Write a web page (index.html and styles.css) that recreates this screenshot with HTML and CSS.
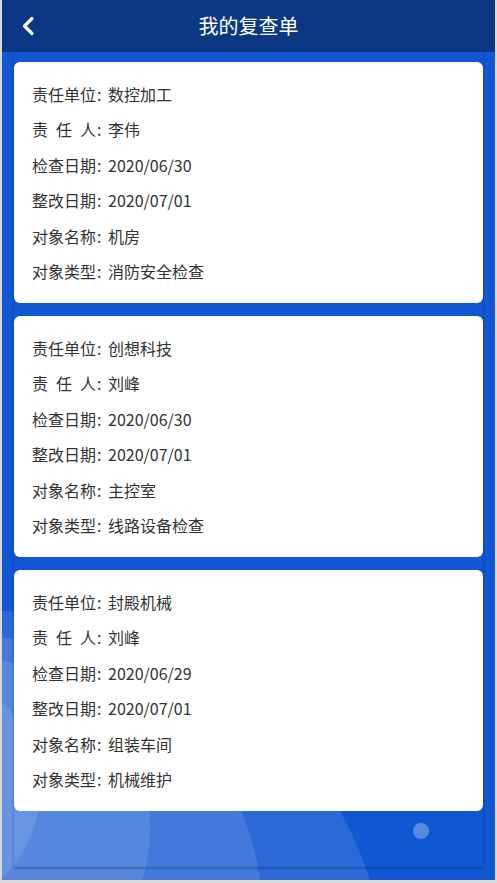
FILE: index.html
```html
<!DOCTYPE html>
<html lang="zh-CN">
<head>
<meta charset="utf-8">
<title>我的复查单</title>
<link rel="stylesheet" href="styles.css">
</head>
<body>
<div class="app">
  <svg class="bg-deco" width="493" height="880" viewBox="0 0 493 880" aria-hidden="true">
    <circle cx="-2" cy="1000" r="389" class="ring"/>
    <circle cx="-22" cy="920" r="283" class="ring"/>
    <circle cx="-22" cy="830" r="170" class="ring"/>
    <circle cx="-82" cy="790" r="120" class="ring"/>
    <circle cx="419" cy="831" r="8" class="dot"/>
  </svg>
  <header class="topbar">
    <span class="back">
      <svg width="14" height="20" viewBox="0 0 14 20"><path d="M11 2.5 L3.5 10 L11 17.5" fill="none" stroke="#fff" stroke-width="3.2" stroke-linecap="round" stroke-linejoin="round"/></svg>
    </span>
    <h1 class="title">我的复查单</h1>
  </header>
  <main class="panel">
    <section class="card">
      <div class="row"><span class="label">责任单位</span><span class="colon">:</span><span class="value">数控加工</span></div>
      <div class="row"><span class="label">责任人</span><span class="colon">:</span><span class="value">李伟</span></div>
      <div class="row"><span class="label">检查日期</span><span class="colon">:</span><span class="value">2020/06/30</span></div>
      <div class="row"><span class="label">整改日期</span><span class="colon">:</span><span class="value">2020/07/01</span></div>
      <div class="row"><span class="label">对象名称</span><span class="colon">:</span><span class="value">机房</span></div>
      <div class="row"><span class="label">对象类型</span><span class="colon">:</span><span class="value">消防安全检查</span></div>
    </section>
    <section class="card">
      <div class="row"><span class="label">责任单位</span><span class="colon">:</span><span class="value">创想科技</span></div>
      <div class="row"><span class="label">责任人</span><span class="colon">:</span><span class="value">刘峰</span></div>
      <div class="row"><span class="label">检查日期</span><span class="colon">:</span><span class="value">2020/06/30</span></div>
      <div class="row"><span class="label">整改日期</span><span class="colon">:</span><span class="value">2020/07/01</span></div>
      <div class="row"><span class="label">对象名称</span><span class="colon">:</span><span class="value">主控室</span></div>
      <div class="row"><span class="label">对象类型</span><span class="colon">:</span><span class="value">线路设备检查</span></div>
    </section>
    <section class="card">
      <div class="row"><span class="label">责任单位</span><span class="colon">:</span><span class="value">封殿机械</span></div>
      <div class="row"><span class="label">责任人</span><span class="colon">:</span><span class="value">刘峰</span></div>
      <div class="row"><span class="label">检查日期</span><span class="colon">:</span><span class="value">2020/06/29</span></div>
      <div class="row"><span class="label">整改日期</span><span class="colon">:</span><span class="value">2020/07/01</span></div>
      <div class="row"><span class="label">对象名称</span><span class="colon">:</span><span class="value">组装车间</span></div>
      <div class="row"><span class="label">对象类型</span><span class="colon">:</span><span class="value">机械维护</span></div>
    </section>
  </main>
</div>
</body>
</html>
```

FILE: styles.css
```css
* { box-sizing: border-box; }
html, body { margin: 0; padding: 0; }
body {
  background: #dcd9d3;
  font-family: "Noto Sans CJK SC", "Noto Sans", sans-serif;
  width: 497px;
  height: 883px;
  overflow: hidden;
}
.app {
  position: relative;
  margin: 0 2px 3px 2px;
  height: 880px;
  background: #1157d3;
  overflow: hidden;
  display: flex;
  flex-direction: column;
}
.bg-deco {
  position: absolute;
  left: 0;
  top: 0;
}
.ring { fill: #ffffff; fill-opacity: 0.11; }
.dot { fill: #ffffff; fill-opacity: 0.3; }
.topbar {
  position: relative;
  height: 52px;
  flex: 0 0 52px;
  background: #0b3783;
  display: flex;
  align-items: center;
  justify-content: center;
}
.back {
  position: absolute;
  left: 19px;
  top: 16px;
  width: 14px;
  height: 20px;
  display: block;
}
.back svg { display: block; }
.title {
  margin: 0;
  color: #ffffff;
  font-size: 20px;
  font-weight: 400;
  line-height: 52px;
}
.panel {
  position: relative;
  margin: 0 12px;
  height: 815px;
  padding-top: 10px;
  display: flex;
  flex-direction: column;
  gap: 13px;
  box-shadow: 0 1px 3px rgba(0, 0, 0, 0.32);
}
.card {
  background: #ffffff;
  border-radius: 6px;
  height: 241px;
  padding: 14px 18px;
}
.row {
  display: flex;
  align-items: center;
  height: 35.5px;
  font-size: 16px;
  color: #333333;
  white-space: nowrap;
}
.label {
  display: inline-block;
  width: 64px;
  text-align: justify;
  text-align-last: justify;
}
.colon {
  width: 12px;
  padding-left: 1px;
}
.value { }
```
